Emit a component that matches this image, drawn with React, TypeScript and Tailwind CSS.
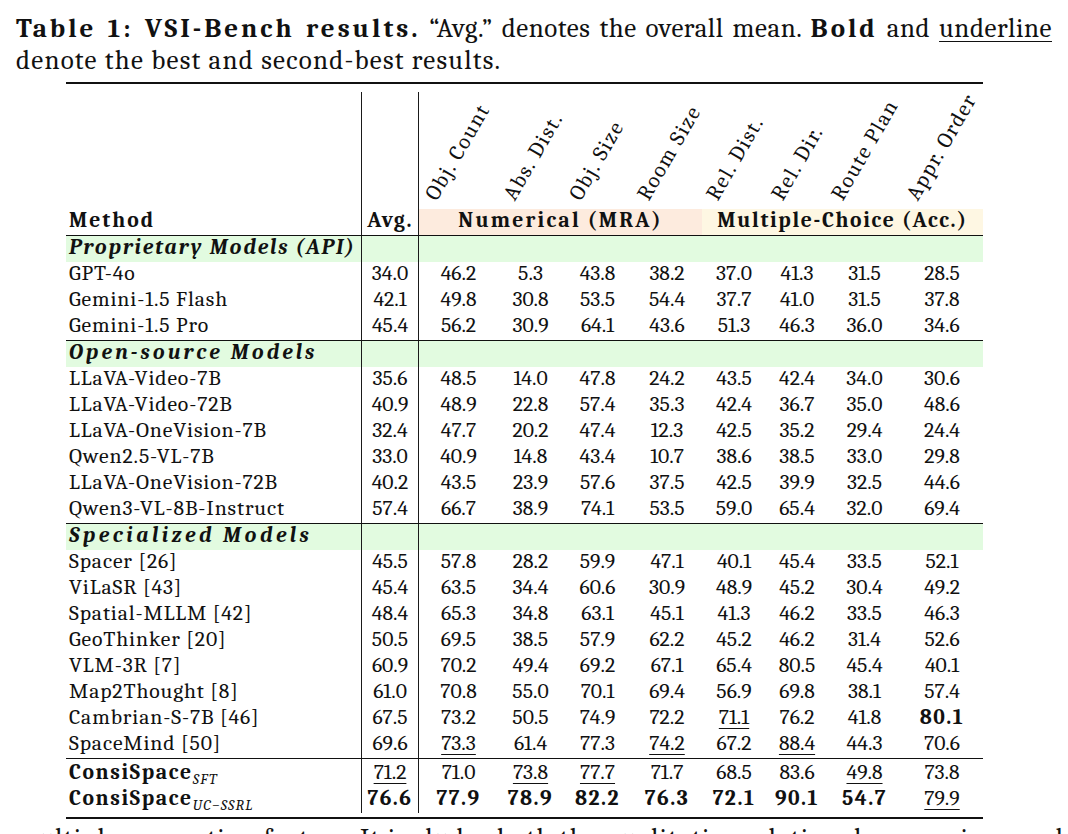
import React from 'react';

// column widths: method | avg | 8 task columns
const COLS = 'grid grid-cols-[296px_57px_79px_65px_69px_70px_64px_62px_73px_82px]';
const VLINE = 'border-r border-[#1a1a1a]';

const tasks = [
  { label: 'Obj. Count', x: 'left-[21px]' },
  { label: 'Abs. Dist.', x: 'left-[20px]' },
  { label: 'Obj. Size', x: 'left-[21px]' },
  { label: 'Room Size', x: 'left-[20px]' },
  { label: 'Rel. Dist.', x: 'left-[19px]' },
  { label: 'Rel. Dir.', x: 'left-[20px]' },
  { label: 'Route Plan', x: 'left-[18px]' },
  { label: 'Appr. Order', x: 'left-[20px]' },
];

type Section = { title: string; track: string; rows: [string, string[]][] };

const sections: Section[] = [
  {
    title: 'Proprietary Models (API)',
    track: 'tracking-[0.085em]',
    rows: [
      ['GPT-4o', ['34.0', '46.2', '5.3', '43.8', '38.2', '37.0', '41.3', '31.5', '28.5']],
      ['Gemini-1.5 Flash', ['42.1', '49.8', '30.8', '53.5', '54.4', '37.7', '41.0', '31.5', '37.8']],
      ['Gemini-1.5 Pro', ['45.4', '56.2', '30.9', '64.1', '43.6', '51.3', '46.3', '36.0', '34.6']],
    ],
  },
  {
    title: 'Open-source Models',
    track: 'tracking-[0.14em]',
    rows: [
      ['LLaVA-Video-7B', ['35.6', '48.5', '14.0', '47.8', '24.2', '43.5', '42.4', '34.0', '30.6']],
      ['LLaVA-Video-72B', ['40.9', '48.9', '22.8', '57.4', '35.3', '42.4', '36.7', '35.0', '48.6']],
      ['LLaVA-OneVision-7B', ['32.4', '47.7', '20.2', '47.4', '12.3', '42.5', '35.2', '29.4', '24.4']],
      ['Qwen2.5-VL-7B', ['33.0', '40.9', '14.8', '43.4', '10.7', '38.6', '38.5', '33.0', '29.8']],
      ['LLaVA-OneVision-72B', ['40.2', '43.5', '23.9', '57.6', '37.5', '42.5', '39.9', '32.5', '44.6']],
      ['Qwen3-VL-8B-Instruct', ['57.4', '66.7', '38.9', '74.1', '53.5', '59.0', '65.4', '32.0', '69.4']],
    ],
  },
  {
    title: 'Specialized Models',
    track: 'tracking-[0.16em]',
    rows: [
      ['Spacer [26]', ['45.5', '57.8', '28.2', '59.9', '47.1', '40.1', '45.4', '33.5', '52.1']],
      ['ViLaSR [43]', ['45.4', '63.5', '34.4', '60.6', '30.9', '48.9', '45.2', '30.4', '49.2']],
      ['Spatial-MLLM [42]', ['48.4', '65.3', '34.8', '63.1', '45.1', '41.3', '46.2', '33.5', '46.3']],
      ['GeoThinker [20]', ['50.5', '69.5', '38.5', '57.9', '62.2', '45.2', '46.2', '31.4', '52.6']],
      ['VLM-3R [7]', ['60.9', '70.2', '49.4', '69.2', '67.1', '65.4', '80.5', '45.4', '40.1']],
      ['Map2Thought [8]', ['61.0', '70.8', '55.0', '70.1', '69.4', '56.9', '69.8', '38.1', '57.4']],
      ['Cambrian-S-7B [46]', ['67.5', '73.2', '50.5', '74.9', '72.2', '_71.1', '76.2', '41.8', '*80.1']],
      ['SpaceMind [50]', ['69.6', '_73.3', '61.4', '77.3', '_74.2', '67.2', '_88.4', '44.3', '70.6']],
    ],
  },
];

const ours: [string, string[]][] = [
  ['SFT', ['_71.2', '71.0', '_73.8', '_77.7', '71.7', '68.5', '83.6', '_49.8', '73.8']],
  ['UC\u2212SSRL', ['*76.6', '*77.9', '*78.9', '*82.2', '*76.3', '*72.1', '*90.1', '*54.7', '_79.9']],
];

const Value: React.FC<{ v: string }> = ({ v }) => {
  if (v.startsWith('*')) return <span className="font-bold tracking-[0.07em]">{v.slice(1)}</span>;
  if (v.startsWith('_'))
    return <span className="underline decoration-1 underline-offset-[4px]">{v.slice(1)}</span>;
  return <span>{v}</span>;
};

const Row: React.FC<{ name: React.ReactNode; vals: string[] }> = ({ name, vals }) => (
  <div className={`${COLS} h-[26px] leading-[22px]`}>
    <div className={`${VLINE} pl-[3px] tracking-[0.04em] whitespace-nowrap`}>{name}</div>
    <div className={`${VLINE} text-center`}>
      <Value v={vals[0]} />
    </div>
    {vals.slice(1).map((v, i) => (
      <div key={i} className="text-center">
        <Value v={v} />
      </div>
    ))}
  </div>
);

const GreenRow: React.FC<{ title: string; track: string }> = ({ title, track }) => (
  <div className={`${COLS} h-[26px] leading-[22px] bg-[#e2fbe0]`}>
    <div className={`${VLINE} ${track} pl-[3px] font-bold italic whitespace-nowrap`}>{title}</div>
    <div className={VLINE} />
    <div className="col-span-8" />
  </div>
);

const Gap: React.FC<{ h: string }> = ({ h }) => (
  <div className={`${COLS} ${h}`}>
    <div className={VLINE} />
    <div className={VLINE} />
  </div>
);

export default function App() {
  return (
    <div className="h-[834px] overflow-hidden bg-white text-[#111] font-serif [font-family:Liberation_Serif,serif]">
      {/* caption */}
      <div className="px-[16px] pt-[13px] w-[1068px] text-[27px] leading-[32px]">
        <p className="tracking-[0.02em] text-justify [text-align-last:justify] whitespace-nowrap">
          <span className="font-bold tracking-[0.11em]">Table 1: VSI-Bench results.</span> “Avg.” denotes the overall
          mean. <span className="font-bold tracking-[0.11em]">Bold</span> and{' '}
          <span className="underline decoration-1 underline-offset-[4px]">underline</span>
        </p>
        <p className="tracking-[0.045em]">denote the best and second-best results.</p>
      </div>

      {/* table */}
      <div className="ml-[66px] mt-[5px] w-[917px] text-[21.7px]">
        <div className="h-[2px] bg-[#111]" />
        <div className="h-[8px]" />

        {/* rotated task labels */}
        <div className={`${COLS} h-[117px]`}>
          <div className={VLINE} />
          <div className={VLINE} />
          {tasks.map((t) => (
            <div key={t.label} className="relative">
              <span
                className={`absolute ${t.x} bottom-[5px] origin-bottom-left -rotate-[60deg] whitespace-nowrap leading-none tracking-[0.075em]`}
              >
                {t.label}
              </span>
            </div>
          ))}
        </div>

        {/* group header */}
        <div className={`${COLS} h-[26px] leading-[22px] font-bold`}>
          <div className={`${VLINE} pl-[3px] tracking-[0.09em]`}>Method</div>
          <div className={`${VLINE} text-center tracking-[0.06em]`}>Avg.</div>
          <div className="col-span-4 bg-[#fdebde] text-center tracking-[0.1em]">Numerical (MRA)</div>
          <div className="col-span-4 bg-[#fef7e3] text-center tracking-[0.075em]">Multiple-Choice (Acc.)</div>
        </div>

        {sections.map((s) => (
          <React.Fragment key={s.title}>
            <div className="h-px bg-[#111]" />
            <GreenRow title={s.title} track={s.track} />
            {s.rows.map(([name, vals]) => (
              <Row key={name} name={name} vals={vals} />
            ))}
          </React.Fragment>
        ))}

        <div className="h-px bg-[#111]" />
        <Gap h="h-[2px]" />
        {ours.map(([sub, vals]) => (
          <Row
            key={sub}
            name={
              <span className="font-bold tracking-[0.075em]">
                ConsiSpace
                <span className="relative top-[5px] text-[15px] font-normal italic tracking-[0.08em]">{sub}</span>
              </span>
            }
            vals={vals}
          />
        ))}
        <div className="h-[4px]" />
        <div className="h-[2px] bg-[#111]" />
      </div>

      {/* following paragraph, cut off by the page edge */}
      <p className="mt-[6px] px-[16px] w-[1068px] text-[27px] leading-[28px] tracking-[0.045em] text-justify [text-align-last:justify] whitespace-nowrap">
        multiple perception factors. It includes both the qualitative relational comparison and
      </p>
    </div>
  );
}
